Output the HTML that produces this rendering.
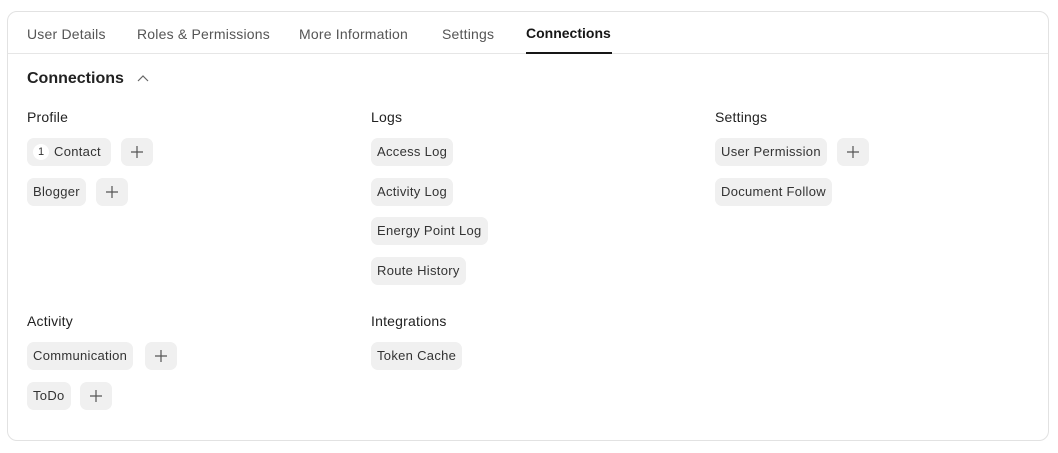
<!DOCTYPE html>
<html><head><style>
body{margin:0;background:#fff;font-family:"Liberation Sans",sans-serif;color:#383838;}
.card{position:absolute;left:7px;top:11px;width:1042px;height:430px;border:1px solid #e2e2e2;border-radius:10px;box-sizing:border-box;}
.line{position:absolute;left:8px;top:53px;width:1040px;height:1px;background:#e6e6e6;}
.t{position:absolute;font-size:14px;color:#555;top:26px;letter-spacing:0.2px}
.act{color:#171717;font-weight:bold;letter-spacing:0}
.ul{position:absolute;left:526px;top:52px;width:86px;height:2px;background:#171717;}
h2{position:absolute;left:27px;top:70px;margin:0;font-size:16px;font-weight:bold;color:#222;}
.h{position:absolute;font-size:14px;color:#222;letter-spacing:0.2px}
.p{position:absolute;height:28px;line-height:28px;background:#f0f0f0;border-radius:7px;font-size:13px;color:#333;padding:0 6px;box-sizing:border-box;white-space:nowrap;letter-spacing:0.3px}
.plus{width:32px;padding:0;}
.plus svg{position:absolute;left:10px;top:8px}
.n{display:inline-block;width:16px;height:16px;border-radius:8px;background:#fff;text-align:center;line-height:16px;font-size:11px;margin-right:5px;vertical-align:middle;position:relative;top:-1px;letter-spacing:0}
</style></head><body>
<div class="card"></div><div class="line"></div>
<div class="t" style="left:27px">User Details</div>
<div class="t" style="left:137px">Roles &amp; Permissions</div>
<div class="t" style="left:299px">More Information</div>
<div class="t" style="left:442px">Settings</div>
<div class="t act" style="left:526px;top:25px">Connections</div>
<div class="ul"></div>
<h2>Connections <svg width="14" height="10" style="margin-left:8px" viewBox="0 0 14 10"><path d="M2 8L7 3L12 8" fill="none" stroke="#666" stroke-width="1.2"/></svg></h2>
<div class="h" style="left:27px;top:109px">Profile</div>
<div class="h" style="left:371px;top:109px">Logs</div>
<div class="h" style="left:715px;top:109px">Settings</div>
<div class="h" style="left:27px;top:313px">Activity</div>
<div class="h" style="left:371px;top:313px">Integrations</div>
<div class="p" style="left:27px;top:138px;width:84px"><span class="n">1</span>Contact</div>
<div class="p plus" style="left:121px;top:138px"><svg width="12" height="12"><path d="M6 0V12M0 6H12" stroke="#555" stroke-width="1.2"/></svg></div>
<div class="p" style="left:27px;top:178px">Blogger</div>
<div class="p plus" style="left:96px;top:178px"><svg width="12" height="12"><path d="M6 0V12M0 6H12" stroke="#555" stroke-width="1.2"/></svg></div>
<div class="p" style="left:371px;top:138px">Access Log</div>
<div class="p" style="left:371px;top:178px">Activity Log</div>
<div class="p" style="left:371px;top:217px">Energy Point Log</div>
<div class="p" style="left:371px;top:257px">Route History</div>
<div class="p" style="left:715px;top:138px">User Permission</div>
<div class="p plus" style="left:837px;top:138px"><svg width="12" height="12"><path d="M6 0V12M0 6H12" stroke="#555" stroke-width="1.2"/></svg></div>
<div class="p" style="left:715px;top:178px">Document Follow</div>
<div class="p" style="left:27px;top:342px">Communication</div>
<div class="p plus" style="left:145px;top:342px"><svg width="12" height="12"><path d="M6 0V12M0 6H12" stroke="#555" stroke-width="1.2"/></svg></div>
<div class="p" style="left:27px;top:382px">ToDo</div>
<div class="p plus" style="left:80px;top:382px"><svg width="12" height="12"><path d="M6 0V12M0 6H12" stroke="#555" stroke-width="1.2"/></svg></div>
<div class="p" style="left:371px;top:342px">Token Cache</div>
</body></html>
